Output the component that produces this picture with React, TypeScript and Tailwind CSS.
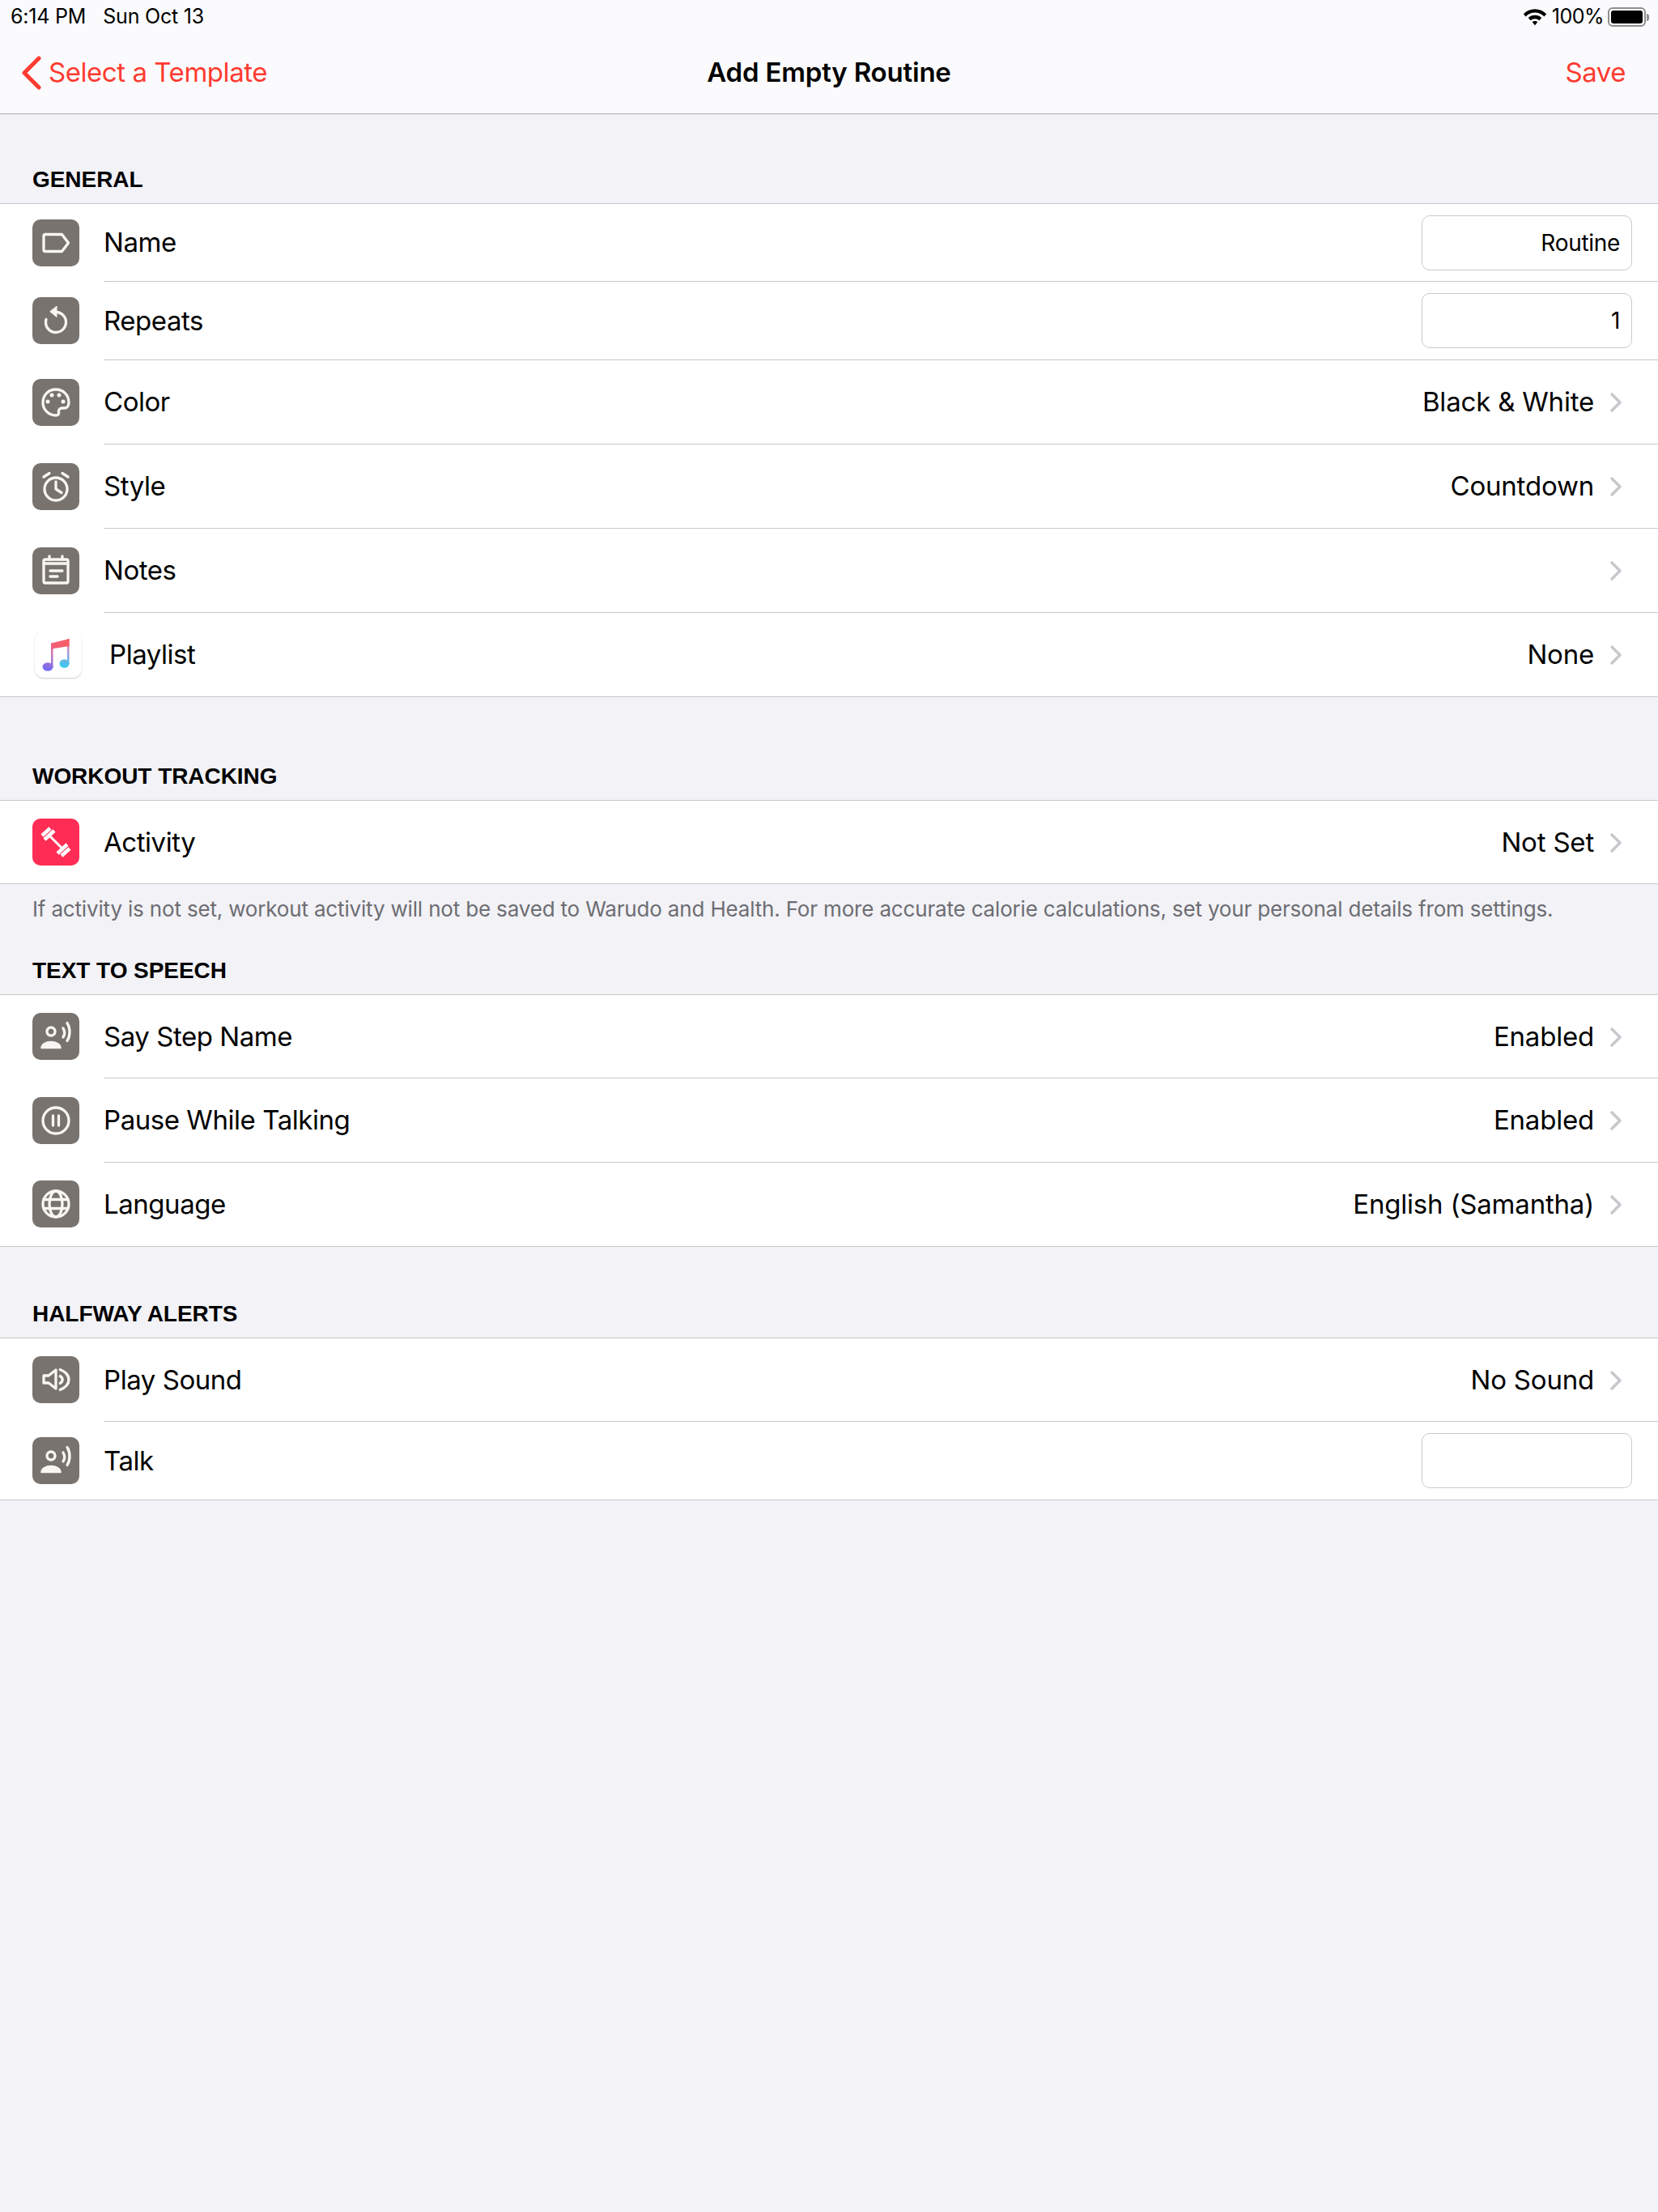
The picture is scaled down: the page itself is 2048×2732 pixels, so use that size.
import { ReactNode } from "react";

const ink = "#f8f6f3";

function Tile({ children, color = "bg-[#78736e]" }: { children: ReactNode; color?: string }) {
  return (
    <div className={`flex h-[58px] w-[58px] items-center justify-center rounded-[10px] ${color}`}>
      {children}
    </div>
  );
}

function Glyph({ children }: { children: ReactNode }) {
  return (
    <svg width="58" height="58" viewBox="0 0 58 58" fill="none" stroke={ink} strokeWidth="3.3" strokeLinecap="round" strokeLinejoin="round">
      {children}
    </svg>
  );
}

const TagIcon = () => (
  <Tile>
    <Glyph>
      <path d="M16 18.500h20.500l8 10.500-8 10.500H16a2 2 0 0 1-2-2v-17a2 2 0 0 1 2-2z" />
    </Glyph>
  </Tile>
);

const RepeatIcon = () => (
  <Tile>
    <Glyph>
      <path d="M29 18.500a12.500 12.500 0 1 1-12 9" />
      <path d="M30 11.500v13l-8-6.500z" fill={ink} strokeWidth="1" />
    </Glyph>
  </Tile>
);

const PaletteIcon = () => (
  <Tile>
    <Glyph>
      <path d="M29 13C20 13 13 20 13 29s7 16 16 16c3 0 4-2 3.500-4-.5-3 1.500-5 4.500-5h3c3 0 5-3 5-7 0-9-7-16-16-16z" />
      <circle cx="19" cy="28" r="2.500" fill={ink} stroke="none" />
      <circle cx="24" cy="20" r="2.500" fill={ink} stroke="none" />
      <circle cx="33" cy="20" r="2.500" fill={ink} stroke="none" />
      <circle cx="38" cy="28" r="2.500" fill={ink} stroke="none" />
    </Glyph>
  </Tile>
);

const AlarmIcon = () => (
  <Tile>
    <Glyph>
      <circle cx="29" cy="32" r="14" />
      <path d="M29 23v9l7 4.500" />
      <path d="M14 17l7-4.500M44 17l-7-4.500" />
    </Glyph>
  </Tile>
);

const NotesIcon = () => (
  <Tile>
    <Glyph>
      <rect x="14" y="15" width="30" height="29" rx="2" />
      <path d="M14 20h30M21 11v4M37 11v4M22 29h15M22 36h9" />
    </Glyph>
  </Tile>
);

const MusicIcon = () => (
  <div className="flex h-[58px] w-[58px] items-center justify-center rounded-[11px] bg-white shadow-[0_1px_2px_rgba(0,0,0,0.2)]">
    <svg width="58" height="58" viewBox="0 0 58 58">
      <defs>
        <linearGradient id="noteLeft" gradientUnits="userSpaceOnUse" x1="20" y1="12" x2="15" y2="50">
          <stop offset="0" stopColor="#fb5c74" />
          <stop offset="0.45" stopColor="#c878b8" />
          <stop offset="1" stopColor="#6e6cf8" />
        </linearGradient>
        <linearGradient id="noteRight" gradientUnits="userSpaceOnUse" x1="40" y1="9" x2="36" y2="46">
          <stop offset="0" stopColor="#fb5c74" />
          <stop offset="0.45" stopColor="#b59ad8" />
          <stop offset="1" stopColor="#2ccdf2" />
        </linearGradient>
        <linearGradient id="noteBeam" gradientUnits="userSpaceOnUse" x1="20" y1="22" x2="42" y2="10">
          <stop offset="0" stopColor="#f0607e" />
          <stop offset="1" stopColor="#fb5c60" />
        </linearGradient>
      </defs>
      <path d="M20 15.500L22.500 15V46h-2.500z" fill="url(#noteLeft)" />
      <ellipse cx="16" cy="44.500" rx="6.500" ry="5.200" fill="url(#noteLeft)" />
      <path d="M40 10.500L42.500 10V41h-2.500z" fill="url(#noteRight)" />
      <ellipse cx="36.500" cy="40.500" rx="6" ry="5.200" fill="url(#noteRight)" />
      <path d="M20 15.500L42.500 10v9L20 22.500z" fill="url(#noteBeam)" />
    </svg>
  </div>
);

const DumbbellIcon = () => (
  <Tile color="bg-[#ff2d55]">
    <svg width="58" height="58" viewBox="0 0 58 58" fill="none" stroke="#fff" strokeLinecap="butt">
      <path d="M20 20l18 18" strokeWidth="3" />
      <path d="M12 21l10-9M15 26l12-11M31 43l12-11M36 46l10-9" strokeWidth="4.500" />
    </svg>
  </Tile>
);

const SpeakIcon = () => (
  <Tile>
    <Glyph>
      <circle cx="23" cy="23" r="5" />
      <path d="M11 43.500c0-5 6-8 12-8s12 3 12 8z" fill={ink} strokeWidth="1.500" />
      <path d="M38 19c2 3.500 2 8 0 11M43 12.500c4 6 4 16 0 22" />
    </Glyph>
  </Tile>
);

const PauseIcon = () => (
  <Tile>
    <Glyph>
      <circle cx="29" cy="29" r="16" />
      <path d="M25.500 23v12M32.500 23v12" />
    </Glyph>
  </Tile>
);

const GlobeIcon = () => (
  <Tile>
    <Glyph>
      <circle cx="29" cy="29" r="16" />
      <ellipse cx="29" cy="29" rx="8" ry="16" />
      <path d="M14 23.500h30M14 34.500h30" />
    </Glyph>
  </Tile>
);

const SoundIcon = () => (
  <Tile>
    <Glyph>
      <path d="M14 24v9h6l9 7V17l-9 7z" />
      <path d="M33 16c16 6 16 20 0 26M33 24c5.500 2 5.500 8 0 10" strokeLinecap="butt" />
    </Glyph>
  </Tile>
);

const Chevron = () => (
  <svg width="16" height="26" viewBox="0 0 16 26" fill="none" stroke="#c7c7cc" strokeWidth="3.500" strokeLinecap="round" strokeLinejoin="round">
    <path d="M3 3l10 10-10 10" />
  </svg>
);

function Field({ value }: { value?: string }) {
  return (
    <div className="mr-[32px] flex h-[68px] w-[260px] items-center justify-end rounded-[10px] border border-[#c9c9cb] bg-white pr-[14px] text-[28px] tracking-[-0.3px]">
      {value}
    </div>
  );
}

type RowProps = {
  icon: ReactNode;
  label: string;
  height: string;
  value?: string;
  field?: string;
  last?: boolean;
  brand?: boolean;
};

function Row({ icon, label, height, value, field, last, brand }: RowProps) {
  return (
    <div className={`flex bg-white ${height}`}>
      <div className={`flex w-[128px] shrink-0 items-center pb-px ${brand ? "pl-[43px]" : "pl-[40px]"}`}>{icon}</div>
      <div className={`flex min-w-0 flex-1 items-center justify-between ${last ? "" : "border-b border-[#c8c8ca]"}`}>
        <span className={`pt-px ${brand ? "pl-[7px]" : ""}`}>{label}</span>
        {field !== undefined ? (
          <Field value={field} />
        ) : (
          <div className="mr-[44px] flex items-center gap-[19px] pt-px">
            <span className="tracking-[-0.2px]">{value}</span>
            <Chevron />
          </div>
        )}
      </div>
    </div>
  );
}

function Heading({ title, height }: { title: string; height: string }) {
  return (
    <div className={`flex items-end pb-[11px] pl-[40px] font-['Liberation_Sans',sans-serif] text-[28px] font-bold leading-[36px] tracking-[-0.05px] text-black ${height}`}>
      {title}
    </div>
  );
}

function Group({ children }: { children: ReactNode }) {
  return <div className="border-y border-[#c8c8ca]">{children}</div>;
}

export default function App() {
  return (
    <div className="min-h-[2732px] bg-[#f2f2f7] font-['Inter',sans-serif] text-[33px] tracking-[-0.45px] text-black">
      <header className="h-[141px] border-b border-[#adadb1] bg-[#fbfbfd]">
        <div className="flex h-[42px] items-center justify-between pl-[13px] pr-[11px] text-[25px] tracking-[-0.2px]">
          <div className="flex gap-[21px]">
            <span>6:14 PM</span>
            <span>Sun Oct 13</span>
          </div>
          <div className="flex items-center gap-[5px]">
            <svg width="32" height="24" viewBox="0 0 28 22" fill="#000">
              <path d="M14 2C9 2 4.500 4 1 7.500l2.500 3C6.500 7.500 10 6 14 6s7.500 1.500 10.500 4.500l2.500-3C23.500 4 19 2 14 2z" />
              <path d="M14 9c-3 0-5.500 1-7.500 3l2.500 3c1.500-1.300 3-2 5-2s3.500.7 5 2l2.500-3c-2-2-4.500-3-7.500-3z" />
              <path d="M14 15.500c-1.300 0-2.300.4-3 1.200l3 3.800 3-3.800c-.7-.8-1.700-1.200-3-1.200z" />
            </svg>
            <span className="tracking-[-0.5px]">100%</span>
            <div className="flex items-center">
              <div className="h-[24px] w-[47px] rounded-[6px] border-2 border-[#8e8e8e] p-[2px]">
                <div className="h-full w-full rounded-[3px] bg-black" />
              </div>
              <div className="ml-[1px] h-[9px] w-[3px] rounded-r-full bg-[#8e8e8e]" />
            </div>
          </div>
        </div>
        <div className="relative flex h-[98px] items-center justify-between pl-[26px] pr-[40px] pb-[2px] text-[#ff3b30]">
          <div className="flex items-center gap-[9px]">
            <svg width="25" height="42" viewBox="0 0 25 42" fill="none" stroke="#ff3b30" strokeWidth="5" strokeLinecap="round" strokeLinejoin="round">
              <path d="M22 3L4 21l18 18" />
            </svg>
            <span>Select a Template</span>
          </div>
          <span className="absolute left-0 right-0 top-[23px] text-center font-semibold tracking-[-0.2px] text-black">Add Empty Routine</span>
          <span>Save</span>
        </div>
      </header>

      <Heading title="GENERAL" height="h-[110px]" />
      <Group>
        <Row height="h-[96px]" icon={<TagIcon />} label="Name" field="Routine" />
        <Row height="h-[97px]" icon={<RepeatIcon />} label="Repeats" field="1" />
        <Row height="h-[104px]" icon={<PaletteIcon />} label="Color" value="Black & White" />
        <Row height="h-[104px]" icon={<AlarmIcon />} label="Style" value="Countdown" />
        <Row height="h-[104px]" icon={<NotesIcon />} label="Notes" />
        <Row height="h-[103px]" icon={<MusicIcon />} label="Playlist" value="None" last brand />
      </Group>

      <Heading title="WORKOUT TRACKING" height="h-[127px]" />
      <Group>
        <Row height="h-[102px]" icon={<DumbbellIcon />} label="Activity" value="Not Set" last />
      </Group>
      <p className="h-[64px] pl-[40px] pt-[15px] text-[26px] leading-[32px] tracking-[-0.17px] text-[#6d6d72]">
        If activity is not set, workout activity will not be saved to Warudo and Health. For more accurate calorie calculations, set your personal details from settings.
      </p>

      <Heading title="TEXT TO SPEECH" height="h-[72px]" />
      <Group>
        <Row height="h-[103px]" icon={<SpeakIcon />} label="Say Step Name" value="Enabled" />
        <Row height="h-[104px]" icon={<PauseIcon />} label="Pause While Talking" value="Enabled" />
        <Row height="h-[103px]" icon={<GlobeIcon />} label="Language" value="English (Samantha)" last />
      </Group>

      <Heading title="HALFWAY ALERTS" height="h-[112px]" />
      <Group>
        <Row height="h-[103px]" icon={<SoundIcon />} label="Play Sound" value="No Sound" />
        <Row height="h-[96px]" icon={<SpeakIcon />} label="Talk" field="" last />
      </Group>
    </div>
  );
}
